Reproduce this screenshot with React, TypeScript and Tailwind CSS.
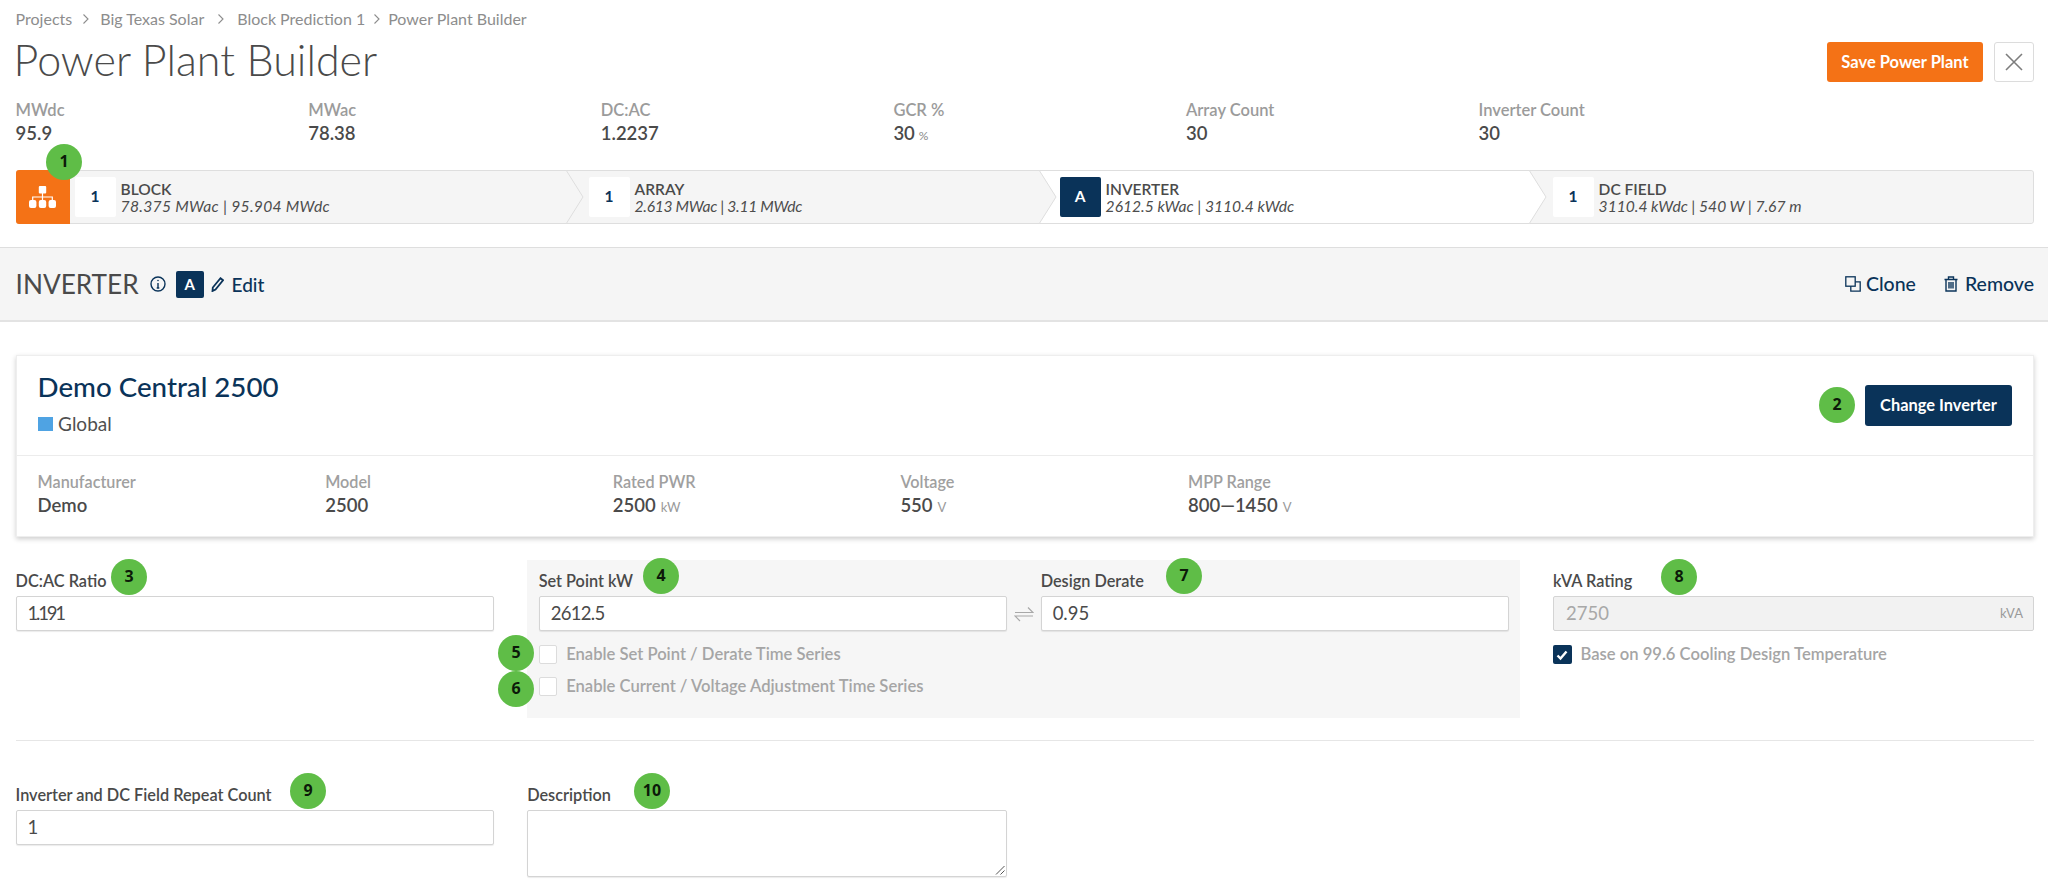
import React from "react";

const navy = "#0a3359";

function Pin({ n, cls }: { n: string; cls: string }) {
  return (
    <div className={`absolute z-20 flex h-9 w-9 items-center justify-center rounded-full bg-[#5fbd47] pb-[3px] font-['Noto_Sans'] text-[16px] font-bold text-[#0c1a09] ${cls}`}>
      {n}
    </div>
  );
}

function Stat({ label, value, unit }: { label: string; value: string; unit?: string }) {
  return (
    <div>
      <div className="h-5 text-[16.5px] font-semibold leading-5 text-[#9b9b9b]">{label}</div>
      <div className="mt-[1px] h-6 text-[18.5px] font-semibold leading-6 text-[#4a4a4a]">
        {value}
        {unit && <span className="ml-1 text-[12px] font-normal text-[#8a8a8a]">{unit}</span>}
      </div>
    </div>
  );
}

function Arrow({ fill }: { fill: string }) {
  return (
    <svg className="absolute left-full top-[-1px] z-10 h-[54px] w-[18px]" viewBox="0 0 18 54">
      <path d="M0 0 L17 27 L0 54 Z" fill={fill} />
      <path d="M0 0 L17 27 L0 54" fill="none" stroke="#dedede" strokeWidth="1" />
    </svg>
  );
}

function Seg({ w, pl, box, boxDark, title, sub, subCls = "", active, arrow, last }: { w: string; pl: string; box: string; boxDark?: boolean; title: string; sub: string; subCls?: string; active?: boolean; arrow?: boolean; last?: boolean }) {
  return (
    <div className={`relative flex h-full items-center ${w} ${pl} ${active ? "bg-white" : "bg-[#f5f5f5]"} ${last ? "rounded-r-[3px]" : ""}`}>
      <div className={`flex h-10 w-[41px] shrink-0 items-center justify-center rounded-[2px] text-[15.5px] font-bold ${boxDark ? "bg-[#0a3359] text-white" : "bg-white text-[#0a3359]"}`}>
        {box}
      </div>
      <div className="ml-[5px] pt-[1px]">
        <div className="h-[17px] text-[15.5px] font-semibold leading-[17px] text-[#4a4a4a]">{title}</div>
        <div className={`h-[17px] text-[15.6px] italic leading-[17px] text-[#4d4d4d] ${subCls}`}>{sub}</div>
      </div>
      {arrow && <Arrow fill={active ? "#ffffff" : "#f5f5f5"} />}
    </div>
  );
}

function Spec({ label, value, unit }: { label: string; value: string; unit?: string }) {
  return (
    <div className="w-[287.6px]">
      <div className="h-5 text-[16.2px] font-semibold leading-5 text-[#a0a0a0]">{label}</div>
      <div className="mt-[1px] h-6 text-[18.5px] font-semibold leading-6 text-[#4a4a4a]">
        {value}
        {unit && <span className="ml-[5px] text-[13px] font-normal text-[#9a9a9a]">{unit}</span>}
      </div>
    </div>
  );
}

function Field({ label, value, cls, vcls = "" }: { label: string; value: string; cls: string; vcls?: string }) {
  return (
    <div className={cls}>
      <div className="mb-[5px] h-5 text-[16.3px] font-semibold leading-5 text-[#4a4a4a]">{label}</div>
      <div className={`flex h-[35px] items-center rounded-[2px] border border-[#d4d4d4] bg-white pl-[11px] text-[18.5px] text-[#4a4a4a] shadow-[0_1px_1px_rgba(0,0,0,0.08)] ${vcls}`}>
        {value}
      </div>
    </div>
  );
}

function Check({ label }: { label: string }) {
  return (
    <div className="flex h-[19px] items-center">
      <div className="h-[19px] w-[18.5px] rounded-[2px] border border-[#dcdcdc] bg-white" />
      <div className="ml-[9px] text-[16.6px] font-semibold text-[#a5a5a5]">{label}</div>
    </div>
  );
}

function Sep({ cls }: { cls: string }) {
  return (
    <svg className={`h-3 w-3 ${cls}`} viewBox="0 0 12 12" fill="none" stroke="#8d8d8d" strokeWidth="1.1">
      <path d="M3.5 1.5 L8 6 L3.5 10.5" />
    </svg>
  );
}

export default function App() {
  return (
    <div className="relative h-[893px] w-full overflow-hidden bg-white font-['Lato',sans-serif]">
      <div className="pl-[15.6px] pr-[14px]">
        <div className="mt-[9px] flex h-5 items-center text-[16px] leading-5 text-[#8d8d8d]">
          <span>Projects</span>
          <Sep cls="mx-[8px]" />
          <span>Big Texas Solar</span>
          <Sep cls="mx-[10.5px]" />
          <span>Block Prediction 1</span>
          <Sep cls="mx-[5.5px]" />
          <span>Power Plant Builder</span>
        </div>
        <div className="mt-[13px] flex h-10 items-center justify-between">
          <div className="-ml-[2px] -mt-[4px] text-[43px] font-light leading-10 text-[#4a4a4a]">Power Plant Builder</div>
          <div className="flex items-center gap-[11px]">
            <button className="flex h-10 w-[156px] items-center justify-center rounded-[3px] bg-[#f47216] text-[16.5px] font-bold text-white">Save Power Plant</button>
            <button className="flex h-10 w-10 items-center justify-center rounded-[3px] border border-[#dcdcdc] bg-white">
              <svg className="h-5 w-5" viewBox="0 0 20 20" stroke="#7d7d7d" strokeWidth="1.6"><path d="M2 2 L18 18 M18 2 L2 18" /></svg>
            </button>
          </div>
        </div>
        <div className="mt-[18px] grid grid-cols-[292.6px_292.6px_292.6px_292.6px_292.6px_292.6px]">
          <Stat label="MWdc" value="95.9" />
          <Stat label="MWac" value="78.38" />
          <Stat label="DC:AC" value="1.2237" />
          <Stat label="GCR %" value="30" unit="%" />
          <Stat label="Array Count" value="30" />
          <Stat label="Inverter Count" value="30" />
        </div>
        <div className="mt-[25px] flex h-[54px] overflow-visible rounded-[3px] border border-[#dedede] bg-[#f5f5f5]">
          <div className="-my-[1px] -ml-[1px] flex h-[54px] w-[54px] shrink-0 items-center justify-center rounded-l-[3px] bg-[#f47216]">
            <svg className="h-[22px] w-[27px]" viewBox="0 0 27 22" fill="#ffffff">
              <rect x="9.8" y="0" width="7.4" height="7.6" rx="1" />
              <path d="M12.9 7 H14.1 V10.4 H23.9 V15 H22.7 V11.6 H14.1 V15 H12.9 V11.6 H4.3 V15 H3.1 V10.4 H12.9 Z" />
              <rect x="0" y="14" width="7.4" height="8" rx="2" />
              <rect x="9.8" y="14" width="7.4" height="8" rx="2" />
              <rect x="19.6" y="14" width="7.4" height="8" rx="2" />
            </svg>
          </div>
          <Seg w="w-[496px]" pl="pl-[5px]" box="1" title="BLOCK" sub="78.375 MWac | 95.904 MWdc" subCls="tracking-[0.3px]" arrow />
          <Seg w="w-[473px]" pl="pl-[23px]" box="1" title="ARRAY" sub="2.613 MWac | 3.11 MWdc" subCls="tracking-[-0.3px]" arrow />
          <Seg w="w-[490px]" pl="pl-[21px]" box="A" boxDark title="INVERTER" sub="2612.5 kWac | 3110.4 kWdc" active arrow />
          <Seg w="flex-1" pl="pl-[24px]" box="1" title="DC FIELD" sub="3110.4 kWdc | 540 W | 7.67 m" last />
        </div>
      </div>

      <div className="mt-[23px] flex h-[75px] items-center justify-between border-b-2 border-t border-b-[#e3e3e3] border-t-[#dedede] bg-[#f5f5f5] pl-[15.6px] pr-[14px]">
        <div className="flex items-center">
          <div className="w-[125px] text-[26.2px] font-normal leading-none text-[#4a4a4a]">INVERTER</div>
          <svg className="ml-[9px] h-4 w-4" viewBox="0 0 16 16" fill="none" stroke={navy} strokeWidth="1.4">
            <circle cx="8" cy="8" r="7" />
            <path d="M8 7 V12 M6.7 12 H9.3" />
            <circle cx="8" cy="4.5" r="0.8" fill={navy} stroke="none" />
          </svg>
          <div className="ml-[10px] flex h-[27px] w-[28px] items-center justify-center rounded-[2px] bg-[#0a3359] text-[15px] font-bold text-white">A</div>
          <svg className="ml-[7px] h-[15px] w-[13px]" viewBox="0 0 13 15" fill="none" stroke={navy} strokeWidth="1.8">
            <path d="M9.5 1.2 L12 3.2 L4.5 12.5 L1.5 14 L1.8 10.5 Z" />
          </svg>
          <div className="ml-[8px] text-[19px] font-medium leading-none text-[#0a3359]">Edit</div>
        </div>
        <div className="flex items-center text-[19.5px] font-medium text-[#0a3359]">
          <svg className="h-4 w-4" viewBox="0 0 16 16" fill="none" stroke={navy} strokeWidth="1.3">
            <rect x="0.8" y="0.8" width="9.4" height="9.4" />
            <path d="M5.8 10.2 V15.2 H15.2 V5.8 H10.2" />
          </svg>
          <span className="ml-[5px]">Clone</span>
          <svg className="ml-[27px] h-4 w-4" viewBox="0 0 16 16" fill="none" stroke={navy} strokeWidth="1.4">
            <path d="M1.5 3.5 H14.5 M5.5 3.5 V1 H10.5 V3.5 M3 3.5 V15 H13 V3.5 M6 6 V12.5 M8 6 V12.5 M10 6 V12.5" />
          </svg>
          <span className="ml-[6px]">Remove</span>
        </div>
      </div>

      <div className="mx-[16px] mt-[33px] h-[182px] w-[2018px] border border-[#eeeeee] bg-white shadow-[0_2px_5px_rgba(0,0,0,0.2)]">
        <div className="flex h-[100px] items-center justify-between border-b border-[#ececec] pl-[20.6px] pr-[21px]">
          <div className="-mt-[4px]">
            <div className="text-[27.7px] font-medium leading-8 text-[#0a3359]">Demo Central 2500</div>
            <div className="mt-[9px] flex items-center">
              <div className="h-[14.5px] w-[15.5px] bg-[#4fa3e3]" />
              <div className="ml-[5px] text-[19px] leading-6 text-[#4f4f4f]">Global</div>
            </div>
          </div>
          <button className="flex h-[41px] w-[147px] items-center justify-center rounded-[3px] bg-[#0a3359] text-[16.4px] font-bold text-white">Change Inverter</button>
        </div>
        <div className="flex pl-[20.6px] pt-[16px]">
          <Spec label="Manufacturer" value="Demo" />
          <Spec label="Model" value="2500" />
          <Spec label="Rated PWR" value="2500" unit="kW" />
          <Spec label="Voltage" value="550" unit="V" />
          <Spec label="MPP Range" value="800—1450" unit="V" />
        </div>
      </div>

      <div className="mt-[23px] flex pl-[15.6px] pr-[14px]">
        <Field cls="w-[478.6px] pt-[11px]" vcls="tracking-[-2.2px]" label="DC:AC Ratio" value="1.191" />
        <div className="ml-[33px] h-[158px] w-[993px] bg-[#f6f6f6] pl-[11.5px] pt-[11px]">
          <div className="flex items-end">
            <Field cls="w-[468.5px]" vcls="tracking-[-0.7px]" label="Set Point kW" value="2612.5" />
            <div className="flex h-[35px] w-[33.5px] items-center justify-center">
              <svg className="h-[18px] w-[20px]" viewBox="0 0 20 18" fill="none" stroke="#a8a8a8" strokeWidth="1.2">
                <path d="M1 7.5 H19 L14 2.5 M19 11 H1 L6 16" />
              </svg>
            </div>
            <Field cls="w-[468.5px]" label="Design Derate" value="0.95" />
          </div>
          <div className="mt-[14px] flex flex-col gap-[13px]">
            <Check label="Enable Set Point / Derate Time Series" />
            <Check label="Enable Current / Voltage Adjustment Time Series" />
          </div>
        </div>
        <div className="ml-[33px] w-[481px] pt-[11px]">
          <div className="mb-[5px] h-5 text-[16.3px] font-semibold leading-5 text-[#4a4a4a]">kVA Rating</div>
          <div className="flex h-[35px] items-center justify-between rounded-[2px] border border-[#d4d4d4] bg-[#f2f2f2] pl-3 pr-[10px] text-[18.5px] text-[#a8a8a8]">
            <span>2750</span>
            <span className="text-[13px] text-[#9a9a9a]">kVA</span>
          </div>
          <div className="mt-[14px] flex h-[19px] items-center">
            <div className="flex h-[19px] w-[18.5px] items-center justify-center rounded-[2px] bg-[#0a3359]">
              <svg className="h-3 w-3" viewBox="0 0 12 12" fill="none" stroke="#ffffff" strokeWidth="2.4"><path d="M1.5 6.5 L4.5 9.5 L10.5 2.5" /></svg>
            </div>
            <div className="ml-[9px] text-[16.6px] font-semibold text-[#a5a5a5]">Base on 99.6 Cooling Design Temperature</div>
          </div>
        </div>
      </div>

      <div className="ml-[15.6px] mr-[14px] mt-[22px] h-px bg-[#e6e6e6]" />

      <div className="mt-[44px] flex pl-[15.6px] pr-[14px]">
        <Field cls="w-[478.6px]" label="Inverter and DC Field Repeat Count" value="1" />
        <div className="ml-[33px] w-[480px]">
          <div className="mb-[5px] h-5 text-[16.3px] font-semibold leading-5 text-[#4a4a4a]">Description</div>
          <div className="relative h-[67px] rounded-[2px] border border-[#d4d4d4] bg-white shadow-[0_1px_1px_rgba(0,0,0,0.08)]">
            <svg className="absolute bottom-[1px] right-[1px] h-[10px] w-[10px]" viewBox="0 0 10 10" stroke="#555555" strokeWidth="1"><path d="M1 9.5 L9.5 1 M5.5 9.5 L9.5 5.5" /></svg>
          </div>
        </div>
      </div>

      <Pin n="1" cls="left-[46px] top-[144px]" />
      <Pin n="2" cls="left-[1819px] top-[387px]" />
      <Pin n="3" cls="left-[111px] top-[559px]" />
      <Pin n="4" cls="left-[643px] top-[558px]" />
      <Pin n="5" cls="left-[498px] top-[635px]" />
      <Pin n="6" cls="left-[498px] top-[671px]" />
      <Pin n="7" cls="left-[1166px] top-[558px]" />
      <Pin n="8" cls="left-[1661px] top-[559px]" />
      <Pin n="9" cls="left-[290px] top-[773px]" />
      <Pin n="10" cls="left-[634px] top-[773px]" />
    </div>
  );
}
